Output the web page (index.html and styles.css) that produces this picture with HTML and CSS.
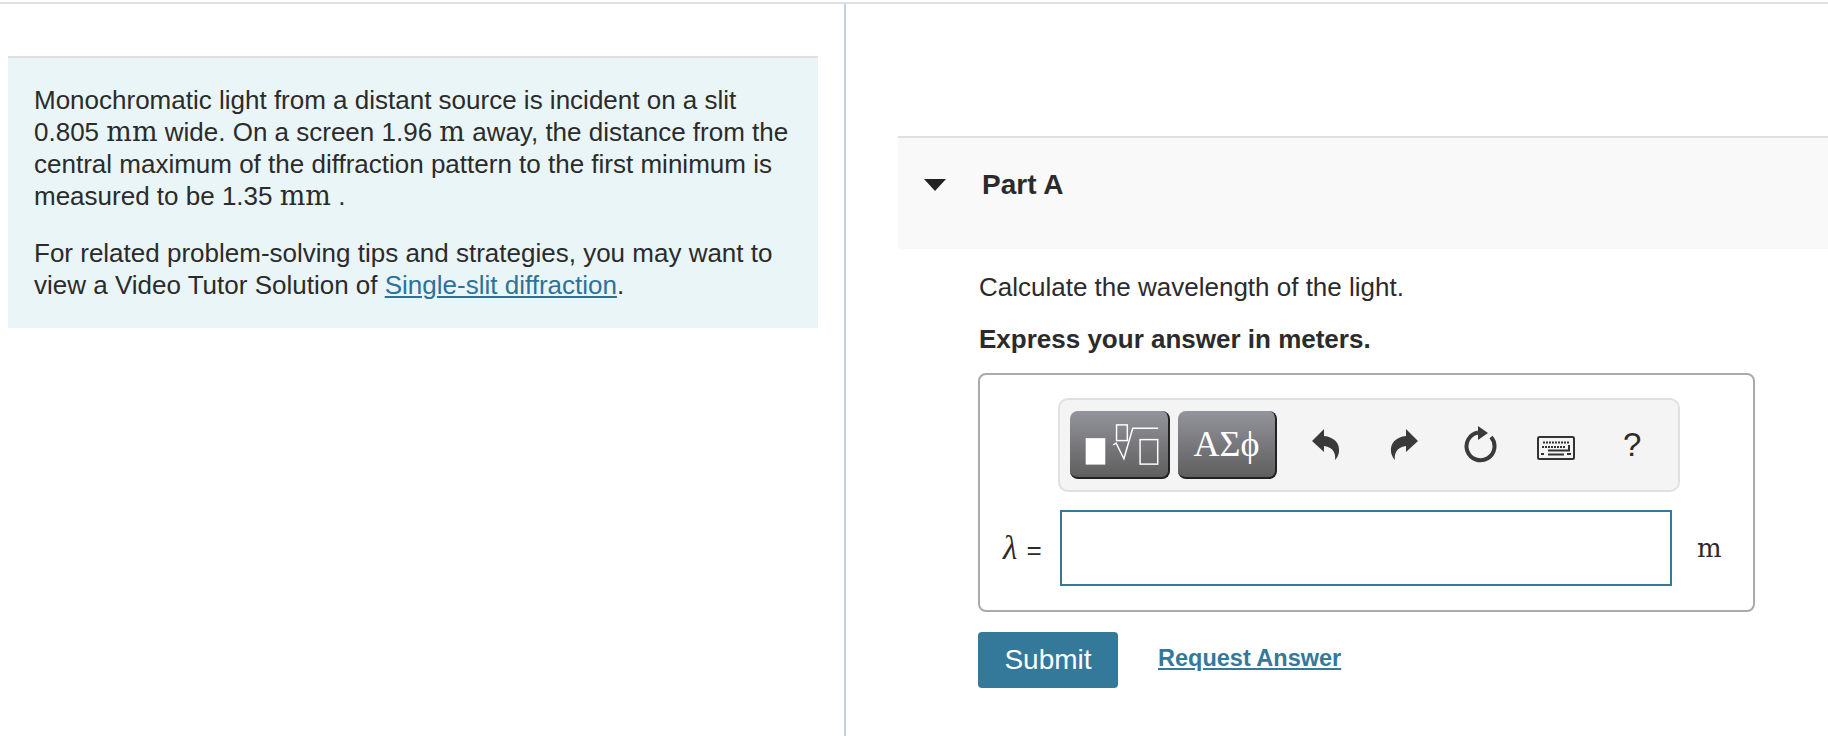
FILE: index.html
```html
<!DOCTYPE html>
<html lang="en">
<head>
    <meta charset="UTF-8">
    <title>Part A</title>
    <link rel="stylesheet" href="styles.css">
</head>
<body>
    <div class="page">
        <div class="left-col">
            <div class="intro">
                <p>Monochromatic light from a distant source is incident on a slit<br>0.805 <span class="unit">mm</span> wide. On a screen 1.96 <span class="unit">m</span> away, the distance from the<br>central maximum of the diffraction pattern to the first minimum is<br>measured to be 1.35 <span class="unit">mm</span> .</p>
                <p>For related problem-solving tips and strategies, you may want to<br>view a Video Tutor Solution of <a href="#">Single-slit diffraction</a>.</p>
            </div>
        </div>
        <div class="right-col">
            <div class="part-head">
                <span class="caret"></span>
                <span class="part-title">Part A</span>
            </div>
            <div class="part-body">
                <p class="question">Calculate the wavelength of the light.</p>
                <p class="express">Express your answer in meters.</p>
                <div class="answer-box">
                    <div class="toolbar">
                        <button class="tmpl-btn tmpl-math" type="button">
                            <svg width="100" height="68" viewBox="0 0 100 68">
                                <rect x="16" y="27" width="20" height="27" fill="#fff"/>
                                <rect x="47.500" y="13.500" width="11" height="16" fill="none" stroke="#fff" stroke-width="1.500"/>
                                <path d="M44 34 L47 32 L55 48 L64 17 H90" fill="none" stroke="#fff" stroke-width="1.500"/>
                                <rect x="71.500" y="28.500" width="18" height="25" fill="none" stroke="#fff" stroke-width="1.500"/>
                            </svg>
                        </button>
                        <button class="tmpl-btn tmpl-greek" type="button">ΑΣϕ</button>
                        <svg class="tool-icon undo" width="28" height="32" viewBox="0 0 28 32">
                            <path d="M0 12 L12 0 V7 C22 8 28 14 27 23 C26.500 27 24 30 23 31 C24 26 22 18 12 17 V23 Z" fill="#3a3a3a"/>
                        </svg>
                        <svg class="tool-icon redo" width="28" height="32" viewBox="0 0 28 32">
                            <path d="M28 12 L16 0 V7 C6 8 0 14 1 23 C1.500 27 4 30 5 31 C4 26 6 18 16 17 V23 Z" fill="#3a3a3a"/>
                        </svg>
                        <svg class="tool-icon reset" width="34" height="38" viewBox="0 0 34 38">
                            <path d="M28 11 A14 14 0 1 1 15 6.500" fill="none" stroke="#3a3a3a" stroke-width="4"/>
                            <path d="M15 0 L25 7 L15 14 Z" fill="#3a3a3a"/>
                        </svg>
                        <svg class="tool-icon keys" width="38" height="24" viewBox="0 0 38 24">
                            <rect x="1" y="1" width="36" height="22" rx="1.500" fill="#f4f4f4" stroke="#333" stroke-width="2"/>
                            <path d="M6 6.500 H32 M5 11 H28" fill="none" stroke="#333" stroke-width="2" stroke-dasharray="2 1"/>
                            <path d="M32 9 V14.500 H11 M4 18 H7 M11 18.500 H27 M30 18 H34" fill="none" stroke="#333" stroke-width="2"/>
                        </svg>
                        <span class="help">?</span>
                    </div>
                    <div class="input-row">
                        <span class="var-label"><i>λ</i> =</span>
                        <input class="answer-input" type="text">
                        <span class="unit">m</span>
                    </div>
                </div>
                <div class="actions">
                    <button class="submit" type="button">Submit</button>
                    <a class="request" href="#">Request Answer</a>
                </div>
            </div>
        </div>
    </div>
</body>
</html>
```

FILE: styles.css
```css
html, body {
    margin: 0;
    height: 100%;
    overflow: hidden;
    background: #fff;
}

body {
    font-family: "Liberation Sans", Arial, sans-serif;
    font-size: 26px;
    color: #2b2b2b;
}

.page {
    display: flex;
    height: 733px;
    margin-top: 2px;
    border-top: 2px solid #e0e0e0;
}

.left-col {
    width: 846px;
    flex-shrink: 0;
    border-right: 2px solid #c3cfdf;
    padding: 52px 0 0 8px;
    box-sizing: border-box;
}

.intro {
    width: 810px;
    box-sizing: border-box;
    background: #e9f5f7;
    border-top: 2px solid #e0e0e0;
    padding: 26px 26px 27px;
    line-height: 32px;
}

.intro p {
    margin: 0 0 25px;
    white-space: nowrap;
}

.intro p:last-child {
    margin-bottom: 0;
}

.intro a {
    color: #2d7299;
}

.unit {
    font-family: "DejaVu Serif", serif;
    font-size: 27px;
    line-height: 1;
}

.right-col {
    flex: 1;
    padding-top: 132px;
    padding-left: 52px;
}

.part-head {
    display: flex;
    height: 113px;
    background: #f9f9f9;
    border-top: 2px solid #e0e0e0;
    padding-top: 29px;
    box-sizing: border-box;
}

.caret {
    width: 0;
    height: 0;
    margin: 12px 36px 0 26px;
    border-left: 11px solid transparent;
    border-right: 11px solid transparent;
    border-top: 12px solid #222;
}

.part-title {
    font-weight: bold;
    font-size: 28px;
    line-height: 36px;
}

.part-body {
    padding: 22px 0 0 81px;
}

.question {
    margin: 0 0 20px;
    line-height: 32px;
}

.express {
    margin: 0 0 18px;
    font-weight: bold;
    line-height: 32px;
}

.answer-box {
    width: 777px;
    height: 239px;
    margin-left: -1px;
    box-sizing: border-box;
    border: 2px solid #aaa;
    border-radius: 8px;
    padding: 23px 0 0 78px;
}

.toolbar {
    display: flex;
    align-items: center;
    width: 622px;
    height: 94px;
    box-sizing: border-box;
    background: #f4f4f4;
    border: 2px solid #e0e0e0;
    border-radius: 10px;
}

.tmpl-btn {
    height: 68px;
    padding: 0;
    border: none;
    border-right: 2px solid #222;
    border-bottom: 2px solid #222;
    border-radius: 8px;
    background: linear-gradient(#93939b, #5f5f5f);
    color: #fff;
    box-sizing: border-box;
    overflow: hidden;
}

.tmpl-math {
    width: 100px;
    margin-left: 10px;
    margin-right: 8px;
    display: flex;
}

.tmpl-greek {
    width: 99px;
    font-family: "Liberation Serif", serif;
    font-size: 36px;
    margin-right: 35px;
}

.tool-icon {
    flex-shrink: 0;
}

.undo {
    margin-right: 50px;
}

.redo {
    margin-right: 45px;
}

.reset {
    margin-right: 40px;
}

.keys {
    margin-top: 6px;
    margin-right: 48px;
}

.help {
    font-size: 33px;
}

.input-row {
    display: flex;
    align-items: center;
    margin-top: 18px;
}

.var-label {
    width: 0;
    white-space: nowrap;
    position: relative;
    left: -55px;
    word-spacing: 2px;
}

.var-label i {
    font-family: "Liberation Serif", serif;
    font-size: 33px;
}

.answer-input {
    width: 612px;
    height: 76px;
    box-sizing: border-box;
    border: 2px solid #34789a;
    border-radius: 0;
    margin: 0 25px 0 2px;
    background: #fff;
}

.input-row .unit {
    font-size: 26px;
}

.actions {
    display: flex;
    align-items: center;
    margin-top: 20px;
    margin-left: -1px;
}

.submit {
    width: 140px;
    height: 56px;
    background: #34789a;
    color: #fff;
    border: none;
    border-radius: 4px;
    font-family: inherit;
    font-size: 28px;
    padding: 0;
}

.request {
    margin-left: 40px;
    margin-bottom: 3px;
    color: #34789a;
    font-weight: bold;
    font-size: 23.500px;
}
```
